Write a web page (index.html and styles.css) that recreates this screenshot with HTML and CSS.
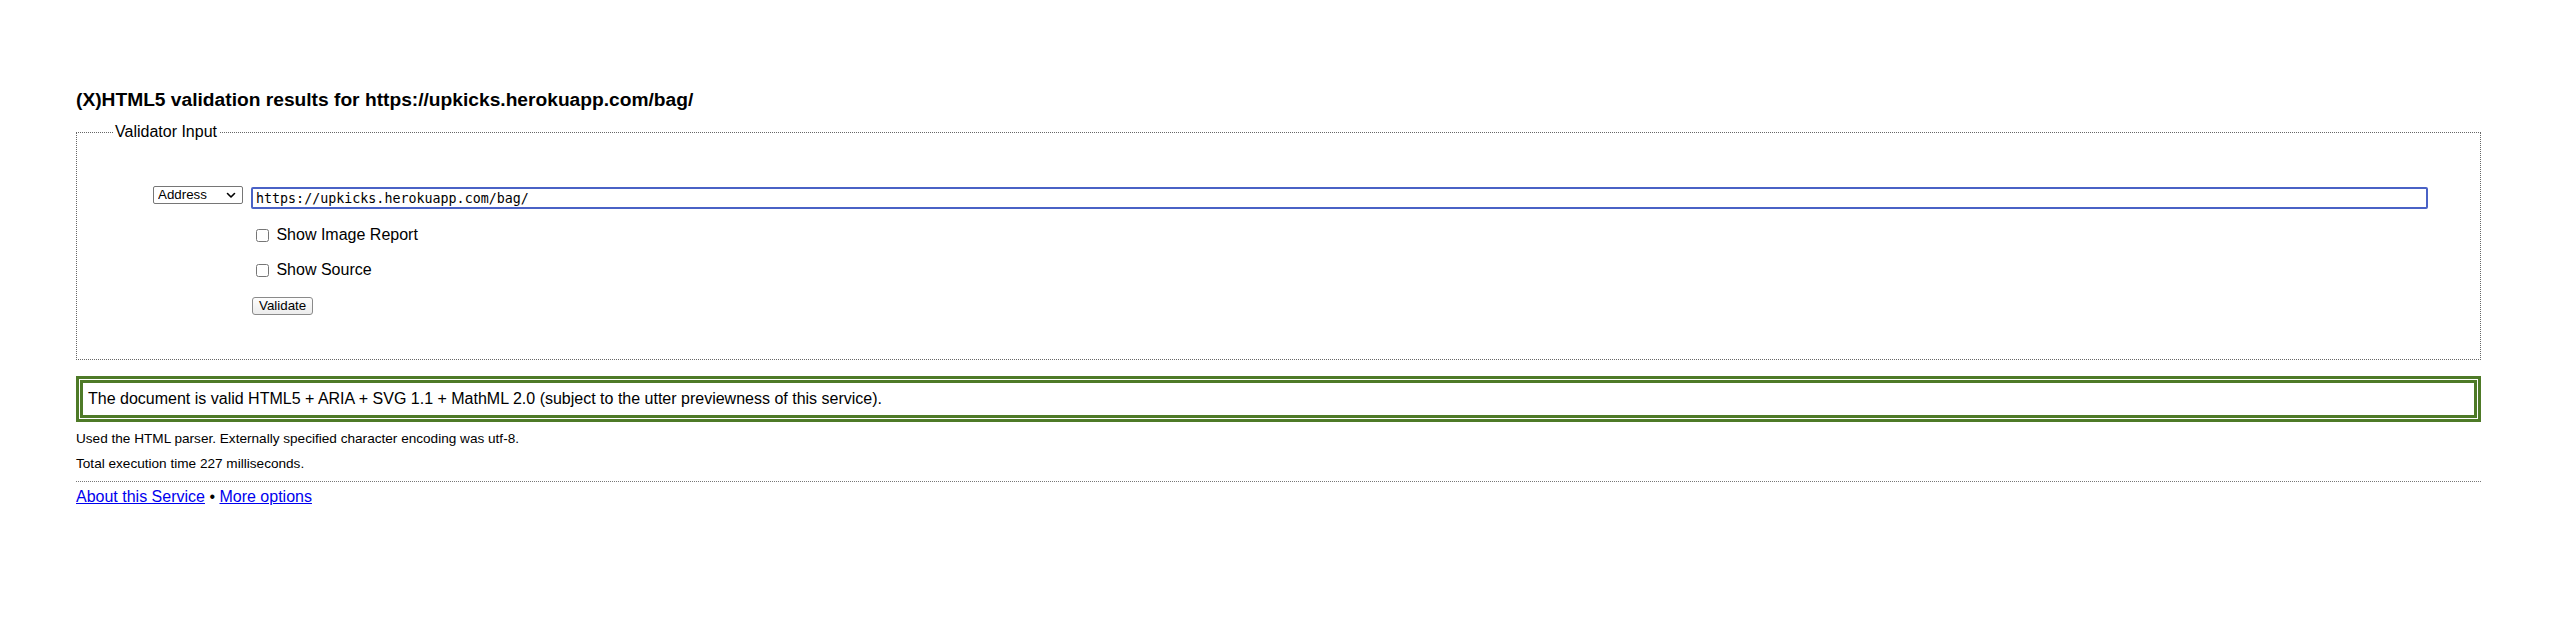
FILE: index.html
```html
<!DOCTYPE html>
<html lang="en">
<head>
<meta charset="utf-8">
<title>Showing results for https://upkicks.herokuapp.com/bag/ - Nu Html Checker</title>
<link rel="stylesheet" href="styles.css">
</head>
<body>
<h1 class="title">(X)HTML5 validation results for https://upkicks.herokuapp.com/bag/</h1>
<form class="checker-form">
  <fieldset class="input-set">
    <legend class="input-legend">Validator Input</legend>
    <div class="form-grid">
      <select class="doc-select">
        <option>Address</option>
        <option>File Upload</option>
        <option>Text Field</option>
      </select>
      <input class="doc-url" type="text" value="https://upkicks.herokuapp.com/bag/">
      <label class="opt-row"><input class="opt-box" type="checkbox"> Show Image Report</label>
      <label class="opt-row"><input class="opt-box" type="checkbox"> Show Source</label>
      <div class="submit-row"><button class="submit-btn" type="button">Validate</button></div>
    </div>
  </fieldset>
</form>
<p class="success">The document is valid HTML5 + ARIA + SVG 1.1 + MathML 2.0 (subject to the utter previewness of this service).</p>
<p class="details first">Used the HTML parser. Externally specified character encoding was utf-8.</p>
<p class="details">Total execution time 227 milliseconds.</p>
<hr class="rule">
<p class="footer-links"><a href="#">About this Service</a> • <a href="#">More options</a></p>
</body>
</html>
```

FILE: styles.css
```css
html {
  background: #fff;
}
body {
  margin: 0;
  padding: 0 78px 0 76px;
  font-family: "Liberation Sans", Arial, Helvetica, sans-serif;
  color: #000;
  font-size: 16px;
}
.title {
  margin: 89px 0 0;
  font-size: 19.2px;
  line-height: 22px;
  font-weight: bold;
}
.checker-form {
  margin: 12px 0 0;
}
.input-set {
  margin: 0;
  border: 1px dotted #666;
  padding: 45px 52px 44px 36px;
  min-width: 0;
}
.input-legend {
  padding: 0 2px;
  font-size: 16px;
  line-height: 18px;
}
.form-grid {
  margin-left: 40px;
  display: grid;
  grid-template-columns: 90px 1fr;
  column-gap: 8px;
  row-gap: 17px;
  align-items: start;
}
.doc-select {
  grid-column: 1;
  box-sizing: border-box;
  width: 90px;
  height: 18px;
  margin: 0;
  -webkit-appearance: none;
  appearance: none;
  font-family: "Liberation Sans", Arial, sans-serif;
  font-size: 13.33px;
  line-height: 16px;
  border: 1px solid #767676;
  border-radius: 2px;
  background-color: #fff;
  background-image: url("data:image/svg+xml,%3Csvg xmlns='http://www.w3.org/2000/svg' width='10' height='7' viewBox='0 0 10 7'%3E%3Cpath d='M1.5 1.5 L5 5 L8.5 1.5' fill='none' stroke='%23000' stroke-width='1.6' stroke-linecap='round' stroke-linejoin='round'/%3E%3C/svg%3E");
  background-repeat: no-repeat;
  background-position: right 6px center;
  color: #000;
  padding: 0 0 0 4px;
}
.doc-url {
  grid-column: 2;
  box-sizing: border-box;
  width: 100%;
  height: 22px;
  margin: 1px 0 0;
  border: 2px solid #4a62c6;
  border-radius: 2px;
  padding: 0 3px;
  font-family: "DejaVu Sans Mono", Menlo, monospace;
  font-size: 13.33px;
  color: #000;
  outline: none;
}
.opt-row {
  grid-column: 2;
  display: flex;
  align-items: center;
  height: 18px;
  line-height: 18px;
  font-size: 16px;
  white-space: pre;
}
.opt-box {
  width: 13px;
  height: 13px;
  margin: 0 3px 0 5px;
}
.submit-row {
  grid-column: 2;
  margin-top: 1px;
  display: flex;
}
.submit-btn {
  box-sizing: border-box;
  height: 18px;
  margin: 0 0 0 1px;
  padding: 0 6px;
  border: 1px solid #8a8a8a;
  border-radius: 3px;
  background: linear-gradient(#fdfdfd, #ececec);
  font-family: "Liberation Sans", Arial, sans-serif;
  font-size: 13.33px;
  line-height: 16px;
  color: #000;
}
.success {
  margin: 16px 0 0;
  border: 3px solid #4e7a27;
  box-shadow: inset 0 0 0 1px #fff, inset 0 0 0 4px #4e7a27;
  padding: 11px 9px;
  line-height: 18px;
  font-size: 16px;
}
.details {
  margin: 10px 0 0;
  font-size: 13.6px;
  line-height: 15px;
}
.details.first {
  margin-top: 9px;
}
.rule {
  margin: 10px 0 0;
  border: 0;
  border-top: 1px dotted #777;
  height: 0;
}
.footer-links {
  margin: 6px 0 0;
  font-size: 16px;
  line-height: 18px;
}
.footer-links a {
  color: #0000ee;
}
```
